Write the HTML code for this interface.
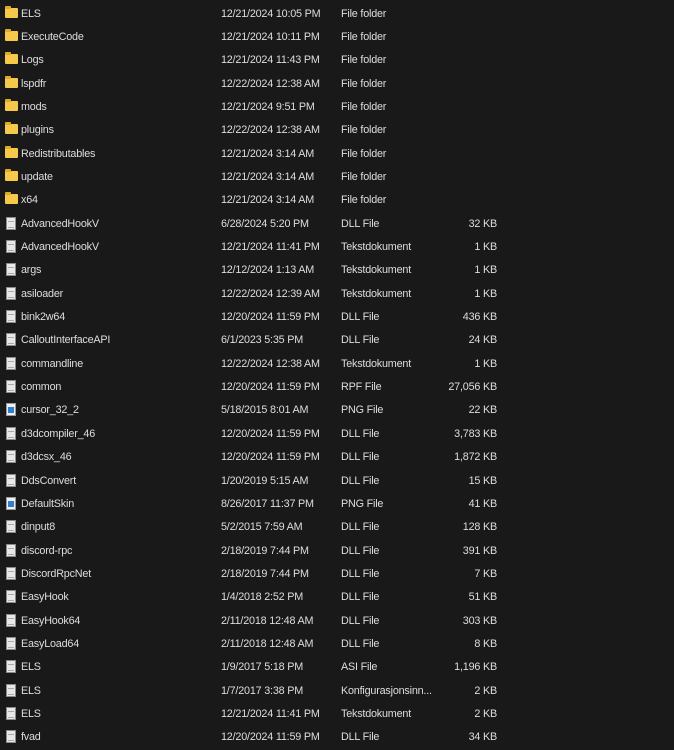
<html><head><style>
body{margin:0;background:#191919;width:674px;height:750px;overflow:hidden;font-family:"Liberation Sans",sans-serif;font-size:10.8px;letter-spacing:-0.2px;color:#dedede}
.r{position:absolute;left:0;height:23px;width:674px}
.r span{position:absolute;top:6px;white-space:nowrap}
.n{left:21px}.d{left:221px}.t{left:341px}.s{right:177px}
.f{position:absolute;left:5px;top:6px;width:13px;height:10px;background:#f7c94b;border-radius:1px}
.f:before{content:"";position:absolute;left:0;top:-2px;width:6px;height:3px;background:#e0a929;border-radius:1px 1px 0 0}
.doc{position:absolute;left:6px;top:5px;width:10px;height:13px;background:#e8e8e8;border:1px solid #8a8a8a;box-sizing:border-box}
.doc:after{content:"";position:absolute;left:1px;right:1px;top:3px;height:5px;border-top:1px solid #aaa;border-bottom:1px solid #aaa}
.png{position:absolute;left:6px;top:5px;width:10px;height:13px;background:#f0f0f0;border:1px solid #9a9a9a;box-sizing:border-box}
.png:after{content:"";position:absolute;left:1px;top:3px;width:6px;height:6px;background:#2f7fd6}
</style></head><body>
<script>
const rows=[
["F","ELS","12/21/2024 10:05 PM","File folder",""],
["F","ExecuteCode","12/21/2024 10:11 PM","File folder",""],
["F","Logs","12/21/2024 11:43 PM","File folder",""],
["F","lspdfr","12/22/2024 12:38 AM","File folder",""],
["F","mods","12/21/2024 9:51 PM","File folder",""],
["F","plugins","12/22/2024 12:38 AM","File folder",""],
["F","Redistributables","12/21/2024 3:14 AM","File folder",""],
["F","update","12/21/2024 3:14 AM","File folder",""],
["F","x64","12/21/2024 3:14 AM","File folder",""],
["D","AdvancedHookV","6/28/2024 5:20 PM","DLL File","32 KB"],
["D","AdvancedHookV","12/21/2024 11:41 PM","Tekstdokument","1 KB"],
["D","args","12/12/2024 1:13 AM","Tekstdokument","1 KB"],
["D","asiloader","12/22/2024 12:39 AM","Tekstdokument","1 KB"],
["D","bink2w64","12/20/2024 11:59 PM","DLL File","436 KB"],
["D","CalloutInterfaceAPI","6/1/2023 5:35 PM","DLL File","24 KB"],
["D","commandline","12/22/2024 12:38 AM","Tekstdokument","1 KB"],
["D","common","12/20/2024 11:59 PM","RPF File","27,056 KB"],
["P","cursor_32_2","5/18/2015 8:01 AM","PNG File","22 KB"],
["D","d3dcompiler_46","12/20/2024 11:59 PM","DLL File","3,783 KB"],
["D","d3dcsx_46","12/20/2024 11:59 PM","DLL File","1,872 KB"],
["D","DdsConvert","1/20/2019 5:15 AM","DLL File","15 KB"],
["P","DefaultSkin","8/26/2017 11:37 PM","PNG File","41 KB"],
["D","dinput8","5/2/2015 7:59 AM","DLL File","128 KB"],
["D","discord-rpc","2/18/2019 7:44 PM","DLL File","391 KB"],
["D","DiscordRpcNet","2/18/2019 7:44 PM","DLL File","7 KB"],
["D","EasyHook","1/4/2018 2:52 PM","DLL File","51 KB"],
["D","EasyHook64","2/11/2018 12:48 AM","DLL File","303 KB"],
["D","EasyLoad64","2/11/2018 12:48 AM","DLL File","8 KB"],
["D","ELS","1/9/2017 5:18 PM","ASI File","1,196 KB"],
["D","ELS","1/7/2017 3:38 PM","Konfigurasjonsinn...","2 KB"],
["D","ELS","12/21/2024 11:41 PM","Tekstdokument","2 KB"],
["D","fvad","12/20/2024 11:59 PM","DLL File","34 KB"]];
let h="";rows.forEach((r,i)=>{const c=r[0]=="F"?"f":r[0]=="P"?"png":"doc";
h+=`<div class="r" style="top:${(1.5+i*23.35).toFixed(2)}px"><i class="${c}"></i><span class="n">${r[1]}</span><span class="d">${r[2]}</span><span class="t">${r[3]}</span><span class="s">${r[4]}</span></div>`});
document.write(h);
</script>
</body></html>
